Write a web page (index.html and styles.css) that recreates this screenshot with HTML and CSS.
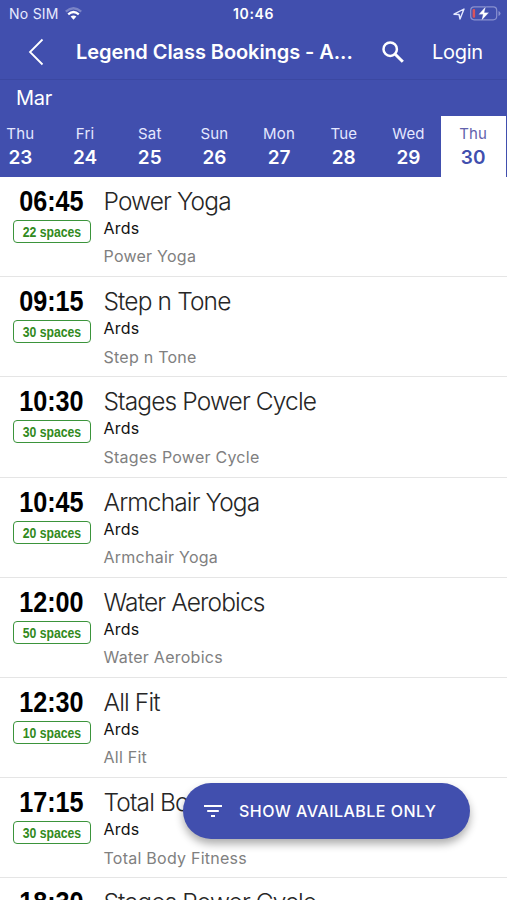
FILE: index.html
```html
<!DOCTYPE html>
<html lang="en">
<head>
<meta charset="utf-8">
<title>Legend Class Bookings</title>
<link rel="stylesheet" href="styles.css">
</head>
<body>
<main class="screen">
  <header class="top">
    <div class="status">
      <div class="carrier"><span>No SIM</span>
        <svg class="wifi" width="17" height="13" viewBox="0 0 17 13" fill="none" stroke="#fff" stroke-width="2.3"><path d="M.8 4.6Q8.5-2 16.2 4.6" opacity=".3"/><path d="M3.2 7.3Q8.5 2.7 13.8 7.3"/><path d="M5.6 9.6Q8.5 7.2 11.4 9.6L8.5 12.8z" fill="#fff" stroke="none"/></svg>
      </div>
      <span class="clock">10:46</span>
      <div class="indicators">
        <svg width="12" height="12" viewBox="0 0 12 12" fill="none" stroke="#e4e8ff" stroke-width="1.4" stroke-linejoin="round"><path d="M1 6.2 11 1 7 11 6 6.5z"/></svg>
        <svg width="31" height="15" viewBox="0 0 31 15"><rect x=".7" y=".8" width="26" height="13" rx="3.5" fill="none" stroke="#8991d0" stroke-width="1.2"/><path d="M28.5 5v5q2-.8 2-2.5t-2-2.5" fill="#8991d0"/><rect x="2.6" y="3" width="2.5" height="8.8" rx="1" fill="#d9535c"/><path d="M15.7.4 8.5 8.4h4.4L11.4 14.8 19 6.5h-4.6z" fill="#fff" stroke="#414fae" stroke-width=".3"/></svg>
      </div>
    </div>
    <nav class="bar">
      <svg class="back" width="16" height="28" viewBox="0 0 16 28" fill="none" stroke="#fff" stroke-width="1.8"><path d="M14.5 1.5 2 14l12.5 12.5"/></svg>
      <h1>Legend Class Bookings - A...</h1>
      <svg class="search" width="22" height="22" viewBox="0 0 22 22" fill="none" stroke="#fff"><circle cx="8.2" cy="8.2" r="6.7" stroke-width="2.5"/><path d="m13 13 7.8 7.8" stroke-width="3"/></svg>
      <a class="login">Login</a>
    </nav>
    <div class="month">Mar</div>
    <div class="days">
      <div class="day"><span>Thu</span><b>23</b></div>
      <div class="day"><span>Fri</span><b>24</b></div>
      <div class="day"><span>Sat</span><b>25</b></div>
      <div class="day"><span>Sun</span><b>26</b></div>
      <div class="day"><span>Mon</span><b>27</b></div>
      <div class="day"><span>Tue</span><b>28</b></div>
      <div class="day"><span>Wed</span><b>29</b></div>
      <div class="day selected"><span>Thu</span><b>30</b></div>
    </div>
  </header>
  <section class="list">
    <article class="row"><div class="slot"><time>06:45</time><div class="badge"><span>22 spaces</span></div></div><div class="info"><h2>Power Yoga</h2><p class="place">Ards</p><p class="kind">Power Yoga</p></div></article>
    <article class="row"><div class="slot"><time>09:15</time><div class="badge"><span>30 spaces</span></div></div><div class="info"><h2>Step n Tone</h2><p class="place">Ards</p><p class="kind">Step n Tone</p></div></article>
    <article class="row"><div class="slot"><time>10:30</time><div class="badge"><span>30 spaces</span></div></div><div class="info"><h2>Stages Power Cycle</h2><p class="place">Ards</p><p class="kind">Stages Power Cycle</p></div></article>
    <article class="row"><div class="slot"><time>10:45</time><div class="badge"><span>20 spaces</span></div></div><div class="info"><h2>Armchair Yoga</h2><p class="place">Ards</p><p class="kind">Armchair Yoga</p></div></article>
    <article class="row"><div class="slot"><time>12:00</time><div class="badge"><span>50 spaces</span></div></div><div class="info"><h2>Water Aerobics</h2><p class="place">Ards</p><p class="kind">Water Aerobics</p></div></article>
    <article class="row"><div class="slot"><time>12:30</time><div class="badge"><span>10 spaces</span></div></div><div class="info"><h2>All Fit</h2><p class="place">Ards</p><p class="kind">All Fit</p></div></article>
    <article class="row"><div class="slot"><time>17:15</time><div class="badge"><span>30 spaces</span></div></div><div class="info"><h2>Total Body Fitness</h2><p class="place">Ards</p><p class="kind">Total Body Fitness</p></div></article>
    <article class="row"><div class="slot"><time>18:30</time></div><div class="info"><h2>Stages Power Cycle</h2></div></article>
  </section>
  <button class="filter">
    <svg width="18" height="12" viewBox="0 0 18 12" stroke="#fff" stroke-width="1.9"><path d="M0 1h18M3.2 6h11.6M7 11h4"/></svg>
    <span>SHOW AVAILABLE ONLY</span>
  </button>
</main>
</body>
</html>
```
FILE: styles.css
```css
* { box-sizing: border-box; }
body { margin: 0; background: #fff; font-family: Inter, "Liberation Sans", sans-serif; }
h1, h2, p { margin: 0; }
.screen { position: relative; width: 507px; height: 900px; overflow: hidden; }
.top { height: 177px; background: #414fae; color: #fff; }
.status { display: grid; grid-template-columns: 1fr auto 1fr; align-items: center; height: 27px; padding: 0 6px 0 9px; }
.carrier { display: flex; align-items: center; gap: 6px; font-size: 14px; letter-spacing: .25px; color: #e8ebff; }
.clock { margin-left: -3px; font-size: 14px; font-weight: 600; letter-spacing: .6px; }
.indicators { display: flex; align-items: center; justify-content: flex-end; gap: 5px; }
.bar { display: flex; align-items: center; height: 53px; padding: 0 0 3px 28px; border-bottom: 1px solid #3b48a2; }
.back { flex: none; }
.bar h1 { width: 306px; padding-left: 32px; font-size: 20px; line-height: 28px; font-weight: 600; letter-spacing: -.07px; white-space: nowrap; }
.search { margin-left: 32px; flex: none; }
.login { margin-left: 28px; font-size: 20px; line-height: 28px; letter-spacing: -.3px; }
.month { height: 36px; padding-left: 16px; font-size: 20px; line-height: 36px; letter-spacing: -.3px; }
.days { display: grid; grid-template-columns: repeat(8, 64.7px); height: 61px; margin-left: -12px; }
.day { display: flex; flex-direction: column; align-items: center; padding-top: 7px; }
.day span { font-size: 15px; line-height: 21px; letter-spacing: .2px; color: #e5e8ff; }
.day b { font-size: 19px; line-height: 28px; font-weight: 600; }
.day.selected { background: #fff; color: #414fae; }
.day.selected span { color: #6262ac; }
.row { display: grid; grid-template-columns: 103.5px 1fr; height: 100.2px; border-bottom: 1px solid #e5e5e5; }
.slot { display: flex; flex-direction: column; align-items: center; padding-top: 7px; }
time { font: bold 30px/34px "Liberation Sans", sans-serif; color: #000; transform: scaleX(.84); }
.badge { display: flex; justify-content: center; width: 78px; height: 23px; margin-top: 2px; border: 1.5px solid #3b943b; border-radius: 4px; }
.badge span { flex: none; font: bold 15px/22px "Liberation Sans", sans-serif; color: #318a20; transform: scaleX(.815); }
.info { padding-top: 7px; white-space: nowrap; }
.info h2 { font-size: 24.5px; line-height: 34px; font-weight: 300; color: #262626; letter-spacing: -.87px; }
.place { font-size: 16px; line-height: 20px; letter-spacing: .25px; color: #111; }
.kind { margin-top: 8.4px; font-size: 16px; line-height: 20px; letter-spacing: .25px; color: #808080; }
.filter { position: absolute; left: 183px; top: 783px; width: 287px; height: 56px; display: flex; align-items: center; gap: 17px; padding: 0 0 0 21px; border: 0; border-radius: 28px; background: #414fae; color: #fff; font: 500 16px Inter, sans-serif; letter-spacing: .47px; box-shadow: 0 5px 9px rgba(0, 0, 0, .32); white-space: nowrap; }
```
